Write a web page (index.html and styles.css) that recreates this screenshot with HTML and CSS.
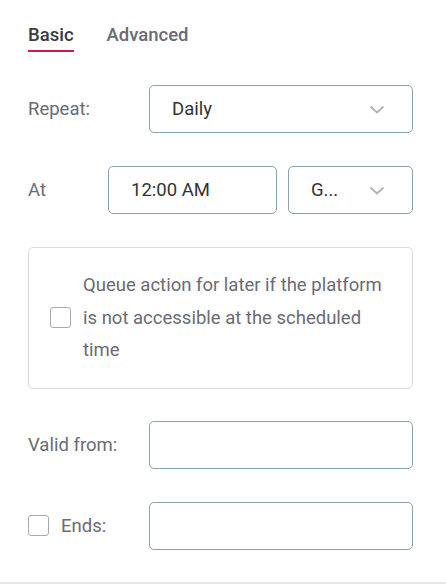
FILE: index.html
```html
<!DOCTYPE html>
<html>
<head>
<meta charset="utf-8">
<link rel="stylesheet" href="styles.css">
</head>
<body>
<div class="panel">
  <div class="tabs">
    <div class="tab active">Basic</div>
    <div class="tab">Advanced</div>
  </div>

  <div class="row">
    <div class="label label-wide">Repeat:</div>
    <div class="field select grow">
      <span class="value">Daily</span>
      <svg class="chev" width="16" height="9" viewBox="0 0 16 9"><path d="M1.5 1.5 L8 7.5 L14.5 1.5" fill="none" stroke="#b3b3b3" stroke-width="2"/></svg>
    </div>
  </div>

  <div class="row">
    <div class="label label-narrow">At</div>
    <div class="field time"><span class="value">12:00 AM</span></div>
    <div class="field select tz">
      <span class="value">G...</span>
      <svg class="chev" width="16" height="9" viewBox="0 0 16 9"><path d="M1.5 1.5 L8 7.5 L14.5 1.5" fill="none" stroke="#b3b3b3" stroke-width="2"/></svg>
    </div>
  </div>

  <div class="queue-box">
    <span class="checkbox"></span>
    <div class="queue-text">Queue action for later if the platform is not accessible at the scheduled time</div>
  </div>

  <div class="row tight">
    <div class="label label-wide">Valid from:</div>
    <div class="field grow"></div>
  </div>

  <div class="row">
    <div class="label label-wide ends">
      <span class="checkbox"></span>
      <span>Ends:</span>
    </div>
    <div class="field grow"></div>
  </div>
</div>
</body>
</html>
```

FILE: styles.css
```css
html, body {
  margin: 0;
  padding: 0;
  background: #ffffff;
}
body {
  font-family: Roboto, "Noto Sans", sans-serif;
  color: #333333;
  width: 446px;
  height: 584px;
  overflow: hidden;
  border-bottom: 2px solid #e6e6e6;
  box-sizing: border-box;
}
.panel {
  padding: 23px 33px 0 28px;
  display: flex;
  flex-direction: column;
  gap: 33px;
}
.tabs {
  display: flex;
  gap: 33px;
  height: 29px;
}
.tab {
  font-size: 18.5px;
  font-weight: 500;
  color: #6b6b75;
  line-height: 24px;
  height: 29px;
  box-sizing: border-box;
}
.tab.active {
  color: #3a3a42;
  border-bottom: 2px solid #d4145a;
}
.row {
  display: flex;
  align-items: center;
  gap: 12px;
}
.tight {
  margin-top: -1px;
}
.label {
  font-size: 18.5px;
  color: #6b6b73;
  flex: none;
}
.label-wide {
  width: 109px;
}
.label-narrow {
  width: 68px;
}
.field {
  height: 48px;
  border: 1px solid #8aa2b0;
  border-radius: 5px;
  box-sizing: border-box;
  display: flex;
  align-items: center;
  padding: 0 24px 0 22px;
  font-size: 18.5px;
  color: #333333;
}
.grow {
  flex: 1;
}
.time {
  width: 169px;
  flex: none;
}
.tz {
  flex: 1;
  margin-left: -1px;
}
.select {
  justify-content: space-between;
}
.chev {
  display: block;
  margin-right: 3px;
}
.queue-box {
  border: 1px solid #d3dde2;
  border-radius: 5px;
  padding: 21px 20px 21px 21px;
  display: flex;
  align-items: center;
  gap: 12px;
}
.checkbox {
  display: block;
  width: 21px;
  height: 21px;
  border: 1px solid #aaaaaa;
  border-radius: 3px;
  box-sizing: border-box;
  flex: none;
}
.queue-text {
  font-size: 18.5px;
  line-height: 32.5px;
  color: #6b6b73;
}
.ends {
  display: flex;
  align-items: center;
  gap: 12px;
}
```
